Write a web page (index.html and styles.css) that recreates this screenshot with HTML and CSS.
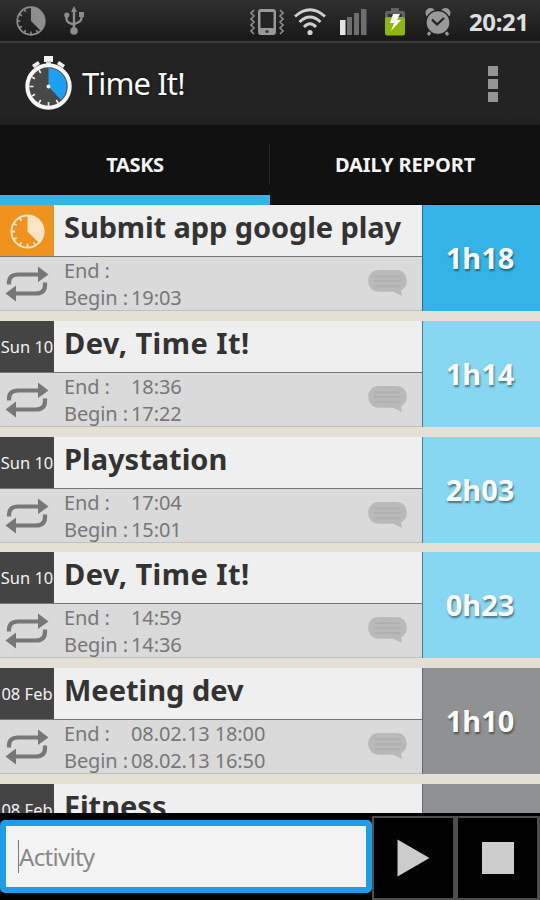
FILE: index.html
```
<!DOCTYPE html>
<html lang="en">
<head>
<meta charset="utf-8">
<title>Time It!</title>
<link rel="stylesheet" href="styles.css">
</head>
<body>
<svg class="defs" width="0" height="0">
  <symbol id="clock" viewBox="0 0 34 34">
    <circle cx="17" cy="17" r="15.6" fill="none" stroke="currentColor" stroke-width="2"/>
    <path d="M17 17V1.5A15.5 15.5 0 0 1 28 28Z" fill="currentColor"/>
    <path d="M17 33v-4M1 17h4M3.200 9l3.400 2M9 3.200l2 3.400M3.200 25l3.400-2M9 30.800l2-3.400M25 30.800l-2-3.400" stroke="currentColor" stroke-width="1.800"/>
  </symbol>
  <symbol id="repeat" viewBox="0 0 44 36">
    <path d="M4 18.500V17C4 11 7 8.500 13 8.500H34M40 16.500V19C40 25 37 27.500 31 27.500H10" fill="none" stroke="#777" stroke-width="4.200"/>
    <path d="M33 0.500L43.500 8.500L33 16ZM11 19.500L0.500 27.500L11 35.500Z" fill="#777"/>
  </symbol>
  <symbol id="bubble" viewBox="0 0 42 30">
    <path d="M12 1H30C37 1 41 6 41 12C41 17 39 20 35 22L36 28L27 23.500H12C5 23.500 1 18 1 12C1 6 5 1 12 1Z" fill="#b9b9b9"/>
    <path d="M8 7.500H34M7 12.500H35M8 17.500H34" stroke="#adadad" stroke-width="1.500"/>
  </symbol>
</svg>
<div class="screen">
  <header class="status">
    <svg class="s-clock"><use href="#clock"/></svg>
    <svg class="s-usb" viewBox="0 0 20 30" fill="#8d8d8d">
      <path d="M10 4V24M2.500 9V13Q2.500 17 10 18.500M17.500 8V12Q17.500 16 10 18" fill="none" stroke="#8d8d8d" stroke-width="2.400"/>
      <path d="M10 0L13 6H7ZM15 6h5v5h-5z"/><circle cx="2.800" cy="9" r="2.600"/><circle cx="10" cy="25" r="3.800"/>
    </svg>
    <svg class="s-vibrate" viewBox="0 0 34 28">
      <path d="M4 2L1 5L4 8L1 11L4 14L1 17L4 20L1 23L4 26M30 2L33 5L30 8L33 11L30 14L33 17L30 20L33 23L30 26" fill="none" stroke="#8d8d8d" stroke-width="1.600"/>
      <rect x="8" y="1" width="18" height="26" rx="3" fill="#999"/><rect x="10.500" y="4" width="13" height="16" fill="#242424"/><circle cx="17" cy="23.500" r="1.600" fill="#333"/>
    </svg>
    <svg class="s-wifi" viewBox="0 0 32 28" fill="none" stroke="#d0d0d0" stroke-width="2.800">
      <path d="M1 8.500Q16-5 31 8.500M5.500 14Q16 4 26.500 14M10 19Q16 12.500 22 19"/><circle cx="16" cy="24.500" r="2.600" fill="#d0d0d0" stroke="none"/>
    </svg>
    <svg class="s-signal" viewBox="0 0 27 26">
      <path d="M0 11h5.500v15H0z" fill="#e4e4e4"/><path d="M7 8h5v18H7zM14 4h5v22h-5zM21 0h5.500v26H21z" fill="#6e6e6e"/>
    </svg>
    <svg class="s-battery" viewBox="0 0 20 28">
      <path d="M6 0h8v3h4q2 0 2 2v6H0V5q0-2 2-2h4z" fill="#626262"/><rect y="9" width="20" height="18.500" rx="2" fill="#8db80b"/><path d="M3 6h14v3H3z" fill="#333"/>
      <path d="M8 6h7l-3 6h4L6 23l3-8H5z" fill="#fff"/>
    </svg>
    <svg class="s-alarm" viewBox="0 0 26 28">
      <path d="M6 23L3 27M20 23l3 4" stroke="#999" stroke-width="3"/>
      <circle cx="5.500" cy="5" r="5" fill="#999"/><circle cx="20.500" cy="5" r="5" fill="#999"/>
      <circle cx="13" cy="14.500" r="12" fill="#999" stroke="#222" stroke-width="1.300"/>
      <path d="M7 11.500L12 16.500L19 10" fill="none" stroke="#222" stroke-width="2.200"/>
    </svg>
    <span class="s-time">20:21</span>
  </header>
  <div class="appbar">
    <svg class="logo" viewBox="0 0 48 54">
      <path d="M19 0h9v6h-9z" fill="#f2f2f2"/>
      <path d="M21 5h5v4h-5z" fill="#ccc"/>
      <path d="M8 10.500l6-4M39 10.500l-6-4" stroke="#f2f2f2" stroke-width="3.500"/>
      <circle cx="23.500" cy="30.500" r="21.200" fill="#484848" stroke="#f5f5f5" stroke-width="4"/>
      <path d="M23.500 30.500V12A18.500 18.500 0 0 1 36 44Z" fill="#1ba0f2"/>
      <path d="M23.500 50v-4M4.500 30.500h4M7 21l3 1.700M14 14l1.700 3M7 40l3-1.700M14 47l1.700-3M33 47l-1.700-3" stroke="#eee" stroke-width="1.600"/>
      <circle cx="23.500" cy="30.500" r="2" fill="#fff"/>
    </svg>
    <h1 class="app-title">Time It!</h1>
    <div class="menu"><i></i><i></i><i></i></div>
  </div>
  <nav class="tabs">
    <div class="tab active"><span class="t-tasks">TASKS</span></div>
    <div class="tab"><span class="t-report">DAILY REPORT</span></div>
  </nav>
  <main class="list">
    <section class="row now">
      <div class="date"><svg class="r-clock"><use href="#clock"/></svg></div>
      <h2 class="name n-long">Submit app google play</h2>
      <div class="repeat"><svg><use href="#repeat"/></svg></div>
      <div class="times"><span>End :</span><span></span><span>Begin :</span><span>19:03</span></div>
      <svg class="bubble"><use href="#bubble"/></svg>
      <div class="total">1h18</div>
    </section>
    <section class="row">
      <div class="date">Sun 10</div>
      <h2 class="name n-dev">Dev, Time It!</h2>
      <div class="repeat"><svg><use href="#repeat"/></svg></div>
      <div class="times"><span>End :</span><span>18:36</span><span>Begin :</span><span>17:22</span></div>
      <svg class="bubble"><use href="#bubble"/></svg>
      <div class="total">1h14</div>
    </section>
    <section class="row">
      <div class="date">Sun 10</div>
      <h2 class="name">Playstation</h2>
      <div class="repeat"><svg><use href="#repeat"/></svg></div>
      <div class="times"><span>End :</span><span>17:04</span><span>Begin :</span><span>15:01</span></div>
      <svg class="bubble"><use href="#bubble"/></svg>
      <div class="total">2h03</div>
    </section>
    <section class="row">
      <div class="date">Sun 10</div>
      <h2 class="name n-dev">Dev, Time It!</h2>
      <div class="repeat"><svg><use href="#repeat"/></svg></div>
      <div class="times"><span>End :</span><span>14:59</span><span>Begin :</span><span>14:36</span></div>
      <svg class="bubble"><use href="#bubble"/></svg>
      <div class="total">0h23</div>
    </section>
    <section class="row old">
      <div class="date">08 Feb</div>
      <h2 class="name">Meeting dev</h2>
      <div class="repeat"><svg><use href="#repeat"/></svg></div>
      <div class="times"><span>End :</span><span>08.02.13 18:00</span><span>Begin :</span><span>08.02.13 16:50</span></div>
      <svg class="bubble"><use href="#bubble"/></svg>
      <div class="total">1h10</div>
    </section>
    <section class="row old">
      <div class="date">08 Feb</div>
      <h2 class="name">Fitness</h2>
      <div class="repeat"></div>
      <div class="times"></div>
      <div class="bubble"></div>
      <div class="total"></div>
    </section>
  </main>
  <footer class="bar">
    <div class="field"><span class="caret"></span><span class="hint">Activity</span></div>
    <div class="btn"><svg viewBox="0 0 33 38"><path d="M.5 .5L32.500 19L.5 37.500Z" fill="#ccc"/></svg></div>
    <div class="btn stop"><i></i></div>
  </footer>
</div>
</body>
</html>
```
FILE: styles.css
```
* { box-sizing: border-box; }
body { margin: 0; background: #000; font-family: "Noto Sans", "Open Sans", sans-serif; }
h1, h2 { margin: 0; }
svg { display: block; flex: none; }
.defs { position: absolute; }
.screen { width: 540px; height: 900px; display: flex; flex-direction: column; overflow: hidden; }

.status { height: 43px; flex: none; display: flex; align-items: flex-start; background: linear-gradient(#303030, #191919); border-bottom: 2px solid #3b3b3b; color: #8d8d8d; }
.s-clock { width: 30px; height: 30px; margin: 6px 0 0 16px; }
.s-usb { width: 20px; height: 30px; margin: 6px 0 0 18px; }
.s-vibrate { width: 34px; height: 28px; margin: 8px 0 0 166px; }
.s-wifi { width: 32px; height: 28px; margin: 8px 0 0 10px; }
.s-signal { width: 27px; height: 26px; margin: 9px 0 0 14px; }
.s-battery { width: 20px; height: 28px; margin: 8px 0 0 18px; }
.s-alarm { width: 26px; height: 28px; margin: 8px 0 0 20px; }
.s-time { margin: 6px 0 0 18px; font-size: 24px; line-height: 31px; font-weight: 700; color: #dedede; letter-spacing: -.4px; white-space: nowrap; }

.appbar { height: 82px; flex: none; display: flex; background: linear-gradient(#232323 90%, #1e1e1e); }
.logo { width: 48px; height: 54px; margin: 13px 0 0 25px; }
.app-title { margin: 19px 0 0 9px; font-size: 31px; line-height: 42px; font-weight: 400; color: #fff; letter-spacing: -.9px; text-shadow: 0 0 2px #000; white-space: nowrap; }
.menu { margin: 23px 42px 0 auto; display: flex; flex-direction: column; gap: 3px; }
.menu i { width: 10px; height: 10px; background: #949494; }

.tabs { height: 80px; flex: none; display: flex; background: #111; border-bottom: 1px solid #000; }
.tab { flex: 1; display: flex; justify-content: center; padding-top: 26px; font-size: 20px; line-height: 28px; font-weight: 700; color: #f5f5f5; white-space: nowrap; }
.tab.active { border-bottom: 10px solid #33b5e5; background: linear-gradient(#292929, #292929) right 20px / 1px 40px no-repeat; margin-bottom: -1px; }
.t-tasks { letter-spacing: -.4px; }
.t-report { letter-spacing: -.1px; }

.list { height: 608px; flex: none; overflow: hidden; display: flex; flex-direction: column; gap: 9.8px; background: #e4e0d6; }
.row { flex: none; height: 106px; display: grid; grid-template-columns: 54px 313px 55px 118px; grid-template-rows: 51px 55px; }
.date { background: #444; color: #f2f2f2; font-size: 16.5px; display: flex; align-items: center; justify-content: center; white-space: nowrap; overflow: hidden; }
.now .date { background: #f0921e; color: #fbe3c3; }
.r-clock { width: 35px; height: 35px; margin-top: 2px; }
.name { grid-column: 2 / 4; background: #efefef; padding-left: 10px; font-size: 29px; line-height: 44px; font-weight: 700; color: #333; white-space: nowrap; }
.n-long { letter-spacing: -.1px; }
.n-dev { letter-spacing: .45px; }
.repeat, .times, .row > .bubble { background: #dadada; border-top: 1px solid #777; border-bottom: 1px solid #c1c0b9; }
.repeat svg { width: 44px; height: 36px; margin: 9px 0 0 5px; }
.times { padding: 0 0 0 10px; display: grid; grid-template-columns: 67px 1fr; grid-template-rows: 27px 27px; font-size: 20px; line-height: 27px; color: #777; white-space: nowrap; letter-spacing: -.1px; }
.row > .bubble { width: 55px; height: 55px; padding: 12px 14px 12px 0; }
.total { grid-column: 4; grid-row: 1 / 3; background: #87d6f2; border-left: 1px solid #567785; margin-left: 1px; box-shadow: -1px 0 #efefef80; color: #fff; font-size: 29px; line-height: 40px; font-weight: 700; display: flex; align-items: center; justify-content: center; padding-right: 3px; text-shadow: 1px 2px 2px rgba(0,0,0,.45); }
.now .total { background: #33b3e6; border-left-color: #1f6f90; }
.old .total { background: #8f9192; border-left-color: #66686a; }
.total { margin-left: 0; box-shadow: none; }

.bar { height: 87px; flex: none; display: flex; background: #000; }
.field { width: 372px; height: 73px; margin-top: 7px; border: 6px solid #1c9de6; border-radius: 5px; background: #f3f3f3; display: flex; align-items: center; padding-left: 12px; }
.caret { width: 1px; height: 33px; background: #777; }
.hint { font-size: 24px; line-height: 34px; color: #888; letter-spacing: -.7px; }
.btn { width: 84px; height: 84px; margin-top: 3px; border: 2px solid #4d4d4d; border-right-width: 3px; display: flex; align-items: center; justify-content: center; }
.btn svg { width: 33px; height: 38px; }
.btn i { width: 32px; height: 32px; background: #ccc; }
```
